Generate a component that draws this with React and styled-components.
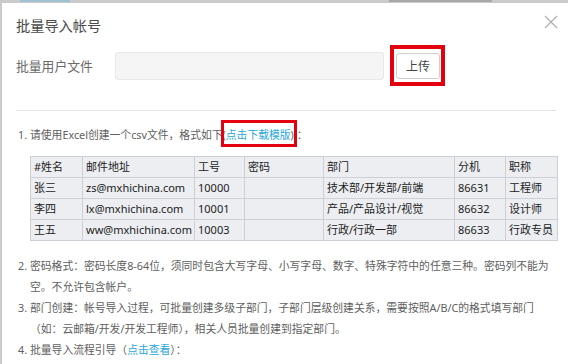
import React from "react"
import styled, { createGlobalStyle } from "styled-components"

const GlobalStyle = createGlobalStyle`
  html, body {
    margin: 0;
    padding: 0;
    height: 100%;
    overflow: hidden;
    background: #cbcbcb;
  }
  body {
    font-family: "Noto Sans", "Noto Sans CJK SC", sans-serif;
  }
`

const rows = [
  ["#姓名", "邮件地址", "工号", "密码", "部门", "分机", "职称"],
  ["张三", "zs@mxhichina.com", "10000", "", "技术部/开发部/前端", "86631", "工程师"],
  ["李四", "lx@mxhichina.com", "10001", "", "产品/产品设计/视觉", "86632", "设计师"],
  ["王五", "ww@mxhichina.com", "10003", "", "行政/行政一部", "86633", "行政专员"],
]

const colWidths = [52, 112, 50, 79, 131, 51, 52]

const ImportDialog = () => {
  return (
    <Page>
      <Peek>
        <PeekMark $left={20} $width={50} $color="#7db8dc" />
        <PeekMark $left={389} $width={103} $color="#8a8a8a" />
      </Peek>
      <Dialog>
        <Header>
          <Title>批量导入帐号</Title>
          <CloseButton aria-label="关闭">
            <svg width="14" height="14" viewBox="0 0 14 14">
              <path d="M1 1 L13 13 M13 1 L1 13" stroke="#ababab" strokeWidth="1.1" fill="none" />
            </svg>
          </CloseButton>
        </Header>

        <FormRow>
          <Label>批量用户文件</Label>
          <FileInput readOnly />
          <Highlight>
            <UploadButton>上传</UploadButton>
          </Highlight>
        </FormRow>

        <Divider />

        <Steps>
          <Step>
            <Num>1.</Num>
            <StepText>
              请使用Excel创建一个csv文件，格式如下
              <Marked>(<Link>点击下载模版</Link>)</Marked> ：
            </StepText>
          </Step>
        </Steps>

        <SampleTable>
          <colgroup>
            {colWidths.map((w, i) => (
              <col key={i} style={{ width: w }} />
            ))}
          </colgroup>
          <tbody>
            {rows.map((r, i) => (
              <tr key={i}>
                {r.map((c, j) => (
                  <Cell key={j}>{c}</Cell>
                ))}
              </tr>
            ))}
          </tbody>
        </SampleTable>

        <Steps $top={14}>
          <Step>
            <Num>2.</Num>
            <StepText>
              密码格式：密码长度8-64位，须同时包含大写字母、小写字母、数字、特殊字符中的任意三种。密码列不能为空。不允许包含帐户。
            </StepText>
          </Step>
          <Step>
            <Num>3.</Num>
            <StepText>
              部门创建：帐号导入过程，可批量创建多级子部门，子部门层级创建关系，需要按照A/B/C的格式填写部门（如：云邮箱/开发/开发工程师），相关人员批量创建到指定部门。
            </StepText>
          </Step>
          <Step>
            <Num>4.</Num>
            <StepText>
              批量导入流程引导（<Link>点击查看</Link>）：
            </StepText>
          </Step>
        </Steps>
      </Dialog>
    </Page>
  )
}

const Page = styled.div`
  height: 100vh;
  display: flex;
  flex-direction: column;
`

const Peek = styled.div`
  height: 3px;
  position: relative;
  flex: none;
`

const PeekMark = styled.span`
  position: absolute;
  top: 0;
  left: ${p => p.$left}px;
  width: ${p => p.$width}px;
  height: 2px;
  background: ${p => p.$color};
  opacity: 0.55;
`

const Dialog = styled.section`
  flex: 1;
  margin-left: 2px;
  background: #fff;
  padding: 0 12px 0 14px;
  box-sizing: border-box;
`

const Header = styled.div`
  display: flex;
  justify-content: space-between;
  align-items: flex-start;
  height: 33px;
`

const Title = styled.h3`
  margin: 0;
  padding-top: 13px;
  font-size: 14.2px;
  line-height: 20px;
  font-weight: normal;
  color: #4a4a4a;
`

const CloseButton = styled.button`
  margin: 12px -2px 0 0;
  padding: 0;
  border: none;
  background: none;
  width: 14px;
  height: 14px;
  display: flex;
  cursor: pointer;
`

const FormRow = styled.div`
  display: flex;
  align-items: center;
  margin-top: 9px;
  height: 41px;
`

const Label = styled.label`
  width: 99px;
  flex: none;
  font-size: 12.8px;
  color: #6a6a6a;
  line-height: 20px;
`

const FileInput = styled.input`
  width: 269px;
  height: 28px;
  box-sizing: border-box;
  background: #f5f5f5;
  border: 1px solid #e8e8e8;
  border-radius: 3px;
  outline: none;
  margin: 0 6px 0 0;
  padding: 0 8px;
`

const Highlight = styled.div`
  display: flex;
  box-sizing: border-box;
  height: 41px;
  width: 55px;
  border: 4px solid #e3000f;
  padding: 4px 1px 3px 2px;
`

const UploadButton = styled.button`
  width: 44px;
  height: 26px;
  padding: 0;
  background: #fff;
  border: 1px solid #cfcfcf;
  border-radius: 3px;
  font-family: "Noto Sans", "Noto Sans CJK SC", sans-serif;
  font-size: 12px;
  color: #444;
  cursor: pointer;
`

const Divider = styled.hr`
  margin: 24px 0 0;
  border: none;
  border-top: 1px solid #e3e3e3;
`

const Steps = styled.div`
  margin-top: ${p => (p.$top ?? 13)}px;
  padding: 0 7px 0 2px;
`

const Step = styled.div`
  display: flex;
  font-size: 10.8px;
  line-height: 21px;
  color: #606060;
`

const Num = styled.span`
  width: 12px;
  flex: none;
`

const StepText = styled.span`
  flex: 1;
`

const Link = styled.a`
  color: #2aa8dc;
  text-decoration: none;
  cursor: pointer;
`

const Marked = styled.span`
  position: relative;

  &::after {
    content: "";
    position: absolute;
    left: -2px;
    right: -3px;
    top: -7px;
    bottom: -5px;
    border: 3px solid #e3000f;
    pointer-events: none;
  }
`

const SampleTable = styled.table`
  margin: 11px 0 0 14px;
  width: 527px;
  table-layout: fixed;
  border-collapse: collapse;
  font-size: 11px;
  color: #222;
`

const Cell = styled.td`
  height: 20px;
  padding: 0 3px;
  background: #eceef1;
  border: 1px solid #cdd0d5;
  white-space: nowrap;
  overflow: hidden;
  line-height: 18px;
`

const App = () => (
  <>
    <GlobalStyle />
    <ImportDialog />
  </>
)

export default App
